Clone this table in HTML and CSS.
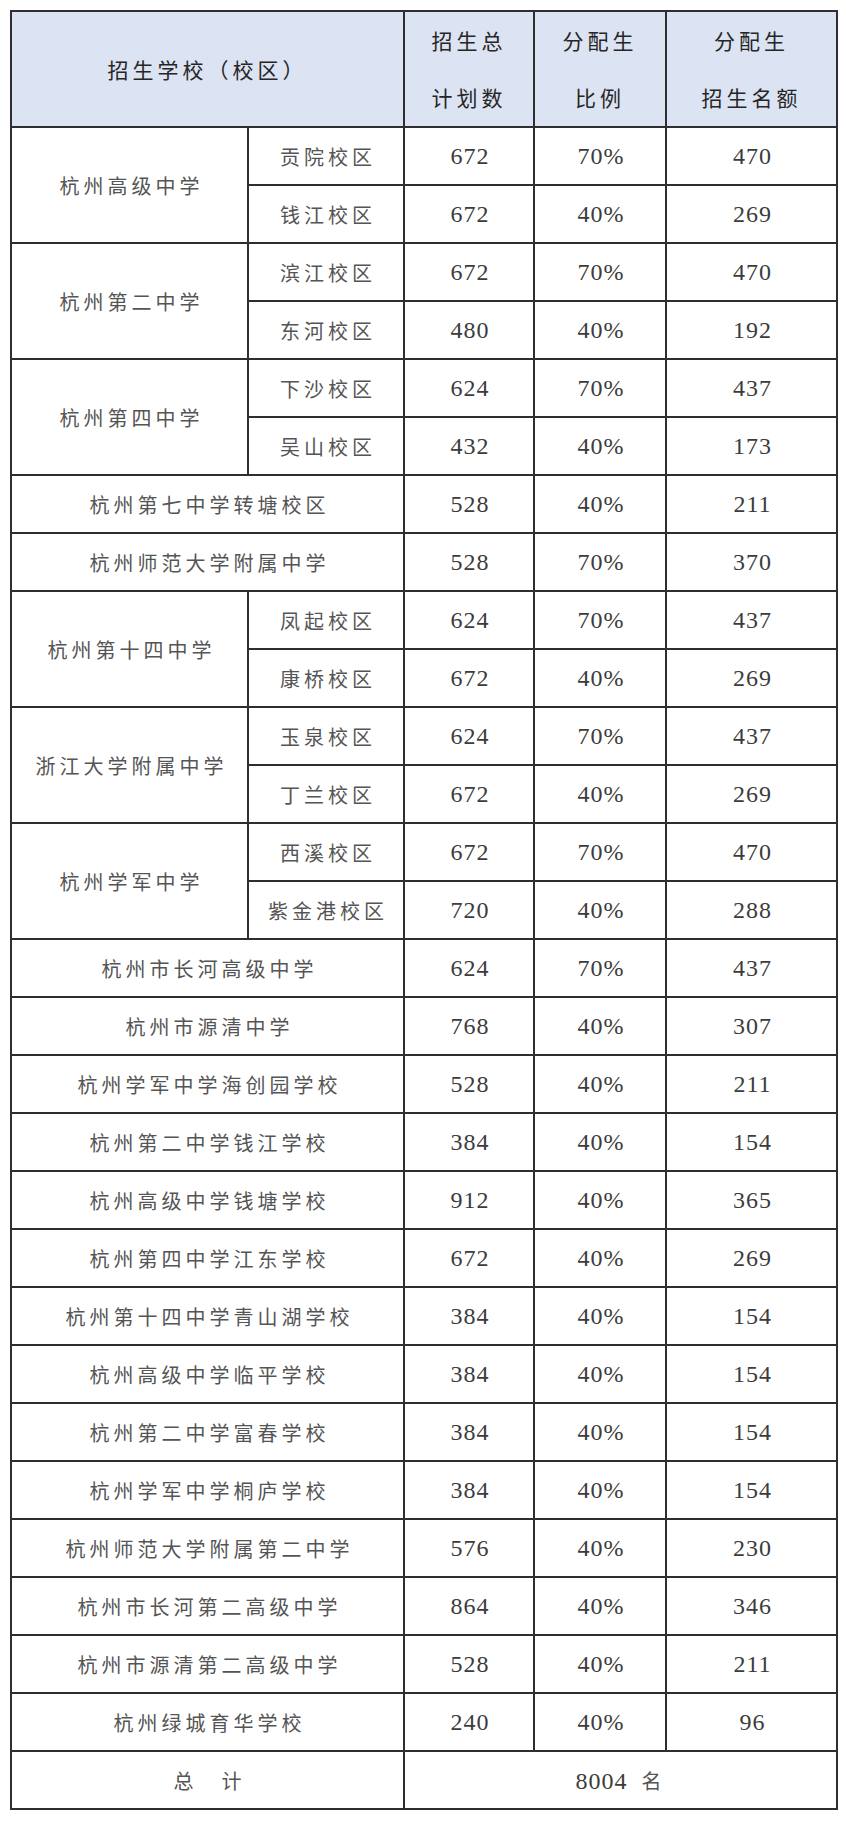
FILE: index.html
```html
<!DOCTYPE html>
<html lang="zh-CN">
<head>
<meta charset="utf-8">
<title>分配生招生名额</title>
<link rel="stylesheet" href="styles.css">
</head>
<body>
<table class="quota">
  <colgroup>
    <col class="c-school">
    <col class="c-campus">
    <col class="c-plan">
    <col class="c-ratio">
    <col class="c-quota">
  </colgroup>
  <thead>
    <tr class="head">
      <th colspan="2"><span class="zh">招生学校（校区）</span></th>
      <th><span class="zh line">招生总</span><span class="zh line">计划数</span></th>
      <th><span class="zh line">分配生</span><span class="zh line">比例</span></th>
      <th><span class="zh line">分配生</span><span class="zh line">招生名额</span></th>
    </tr>
  </thead>
  <tbody>
    <tr><td rowspan="2" class="zh">杭州高级中学</td><td class="zh">贡院校区</td><td class="num">672</td><td class="num">70%</td><td class="num">470</td></tr>
    <tr><td class="zh">钱江校区</td><td class="num">672</td><td class="num">40%</td><td class="num">269</td></tr>
    <tr><td rowspan="2" class="zh">杭州第二中学</td><td class="zh">滨江校区</td><td class="num">672</td><td class="num">70%</td><td class="num">470</td></tr>
    <tr><td class="zh">东河校区</td><td class="num">480</td><td class="num">40%</td><td class="num">192</td></tr>
    <tr><td rowspan="2" class="zh">杭州第四中学</td><td class="zh">下沙校区</td><td class="num">624</td><td class="num">70%</td><td class="num">437</td></tr>
    <tr><td class="zh">吴山校区</td><td class="num">432</td><td class="num">40%</td><td class="num">173</td></tr>
    <tr><td colspan="2" class="zh">杭州第七中学转塘校区</td><td class="num">528</td><td class="num">40%</td><td class="num">211</td></tr>
    <tr><td colspan="2" class="zh">杭州师范大学附属中学</td><td class="num">528</td><td class="num">70%</td><td class="num">370</td></tr>
    <tr><td rowspan="2" class="zh">杭州第十四中学</td><td class="zh">凤起校区</td><td class="num">624</td><td class="num">70%</td><td class="num">437</td></tr>
    <tr><td class="zh">康桥校区</td><td class="num">672</td><td class="num">40%</td><td class="num">269</td></tr>
    <tr><td rowspan="2" class="zh">浙江大学附属中学</td><td class="zh">玉泉校区</td><td class="num">624</td><td class="num">70%</td><td class="num">437</td></tr>
    <tr><td class="zh">丁兰校区</td><td class="num">672</td><td class="num">40%</td><td class="num">269</td></tr>
    <tr><td rowspan="2" class="zh">杭州学军中学</td><td class="zh">西溪校区</td><td class="num">672</td><td class="num">70%</td><td class="num">470</td></tr>
    <tr><td class="zh">紫金港校区</td><td class="num">720</td><td class="num">40%</td><td class="num">288</td></tr>
    <tr><td colspan="2" class="zh">杭州市长河高级中学</td><td class="num">624</td><td class="num">70%</td><td class="num">437</td></tr>
    <tr><td colspan="2" class="zh">杭州市源清中学</td><td class="num">768</td><td class="num">40%</td><td class="num">307</td></tr>
    <tr><td colspan="2" class="zh">杭州学军中学海创园学校</td><td class="num">528</td><td class="num">40%</td><td class="num">211</td></tr>
    <tr><td colspan="2" class="zh">杭州第二中学钱江学校</td><td class="num">384</td><td class="num">40%</td><td class="num">154</td></tr>
    <tr><td colspan="2" class="zh">杭州高级中学钱塘学校</td><td class="num">912</td><td class="num">40%</td><td class="num">365</td></tr>
    <tr><td colspan="2" class="zh">杭州第四中学江东学校</td><td class="num">672</td><td class="num">40%</td><td class="num">269</td></tr>
    <tr><td colspan="2" class="zh">杭州第十四中学青山湖学校</td><td class="num">384</td><td class="num">40%</td><td class="num">154</td></tr>
    <tr><td colspan="2" class="zh">杭州高级中学临平学校</td><td class="num">384</td><td class="num">40%</td><td class="num">154</td></tr>
    <tr><td colspan="2" class="zh">杭州第二中学富春学校</td><td class="num">384</td><td class="num">40%</td><td class="num">154</td></tr>
    <tr><td colspan="2" class="zh">杭州学军中学桐庐学校</td><td class="num">384</td><td class="num">40%</td><td class="num">154</td></tr>
    <tr><td colspan="2" class="zh">杭州师范大学附属第二中学</td><td class="num">576</td><td class="num">40%</td><td class="num">230</td></tr>
    <tr><td colspan="2" class="zh">杭州市长河第二高级中学</td><td class="num">864</td><td class="num">40%</td><td class="num">346</td></tr>
    <tr><td colspan="2" class="zh">杭州市源清第二高级中学</td><td class="num">528</td><td class="num">40%</td><td class="num">211</td></tr>
    <tr><td colspan="2" class="zh">杭州绿城育华学校</td><td class="num">240</td><td class="num">40%</td><td class="num">96</td></tr>
    <tr class="total"><td colspan="2" class="zh">总　计</td><td colspan="3"><span class="num-in">8004</span><span class="zh-in">名</span></td></tr>
  </tbody>
</table>
</body>
</html>
```

FILE: styles.css
```css
html, body {
  background: #ffffff;
}

body {
  margin: 10px 0 0 10px;
  font-family: "Noto Sans CJK SC", "Noto Sans", sans-serif;
  color: #555555;
}

.quota {
  border-collapse: collapse;
  table-layout: fixed;
  width: 826px;
  border: 2px solid #2a2a2a;
}

.c-school { width: 237px; }
.c-campus { width: 156px; }
.c-plan { width: 130px; }
.c-ratio { width: 132px; }
.c-quota { width: 171px; }

.quota th,
.quota td {
  border: 2px solid #2e2e2e;
  padding: 0;
  text-align: center;
  vertical-align: middle;
}

.quota tbody td {
  height: 56px;
}

.head th {
  height: 112px;
  background: #dce3f2;
  font-weight: normal;
  color: #222222;
}

.head th .line {
  display: block;
  line-height: 57px;
}

.zh,
.zh-in {
  font-family: "Noto Sans CJK SC", "Noto Sans", sans-serif;
  font-size: 20px;
  letter-spacing: 4px;
  font-weight: 400;
  color: #555555;
}

.head .zh {
  color: #262626;
  font-size: 21px;
  letter-spacing: 4px;
}

.quota td.zh {
  padding-left: 4px;
}

.num,
.num-in {
  font-family: "Liberation Serif", "Times New Roman", serif;
  font-size: 24px;
  letter-spacing: 1px;
  color: #3c3c3c;
}

.quota td.num {
  padding-left: 2px;
}

.total .zh-in {
  margin-left: 14px;
}
```
